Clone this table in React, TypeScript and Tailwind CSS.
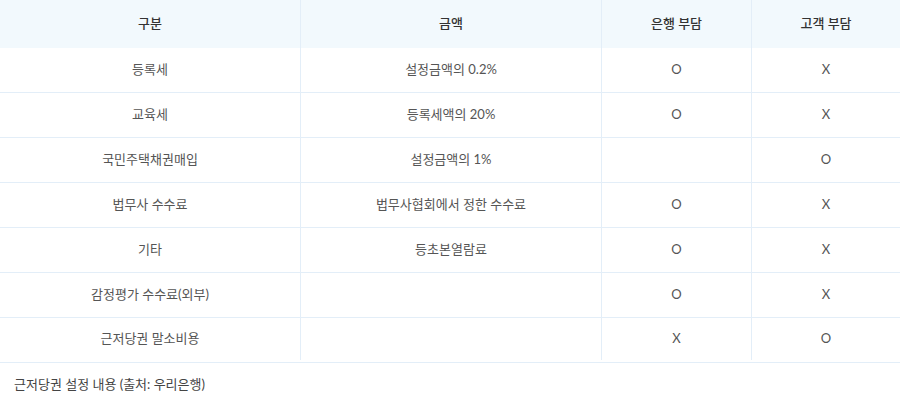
const rows = [
  ["등록세", "설정금액의 0.2%", "O", "X"],
  ["교육세", "등록세액의 20%", "O", "X"],
  ["국민주택채권매입", "설정금액의 1%", "", "O"],
  ["법무사 수수료", "법무사협회에서 정한 수수료", "O", "X"],
  ["기타", "등초본열람료", "O", "X"],
  ["감정평가 수수료(외부)", "", "O", "X"],
  ["근저당권 말소비용", "", "X", "O"],
];

const cols = ["w-[301px]", "w-[301px]", "w-[150px]", "w-[148px]"];
const heads = ["구분", "금액", "은행 부담", "고객 부담"];

export default function App() {
  return (
    <div className="w-[900px] h-[406px] bg-white font-['Lato','Noto_Sans_CJK_KR',sans-serif] text-[13px]">
      <div className="border-b border-[#e3eef8] pb-[2px]">
        <div className="flex h-[48px] bg-[#f2f9fd] text-[#333] font-medium">
          {heads.map((h, i) => (
            <div
              key={h}
              className={`${cols[i]} flex items-center justify-center ${i < 3 ? "border-r border-[#e3eef8]" : ""}`}
            >
              {h}
            </div>
          ))}
        </div>
        {rows.map((r, ri) => (
          <div
            key={ri}
            className={`flex text-[#555] ${ri < rows.length - 1 ? "h-[45px] border-b border-[#e3eef8]" : "h-[42px]"}`}
          >
            {r.map((c, i) => (
              <div
                key={i}
                className={`${cols[i]} flex items-center justify-center ${i < 3 ? "border-r border-[#e3eef8]" : ""}`}
              >
                {c}
              </div>
            ))}
          </div>
        ))}
      </div>
      <p className="mt-[12px] pl-[14px] text-[#444]">근저당권 설정 내용 (출처: 우리은행)</p>
    </div>
  );
}
